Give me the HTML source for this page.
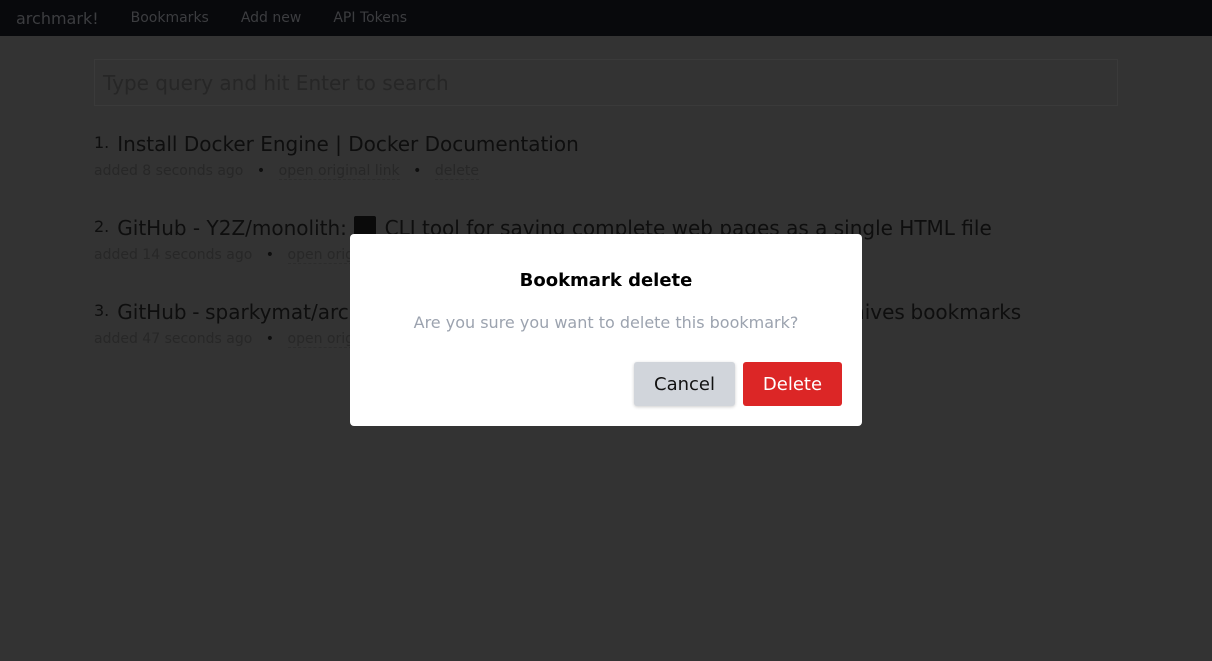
<!DOCTYPE html>
<html><head><style>
*{box-sizing:border-box;margin:0;padding:0}
body{width:1212px;height:661px;overflow:hidden;background:#333;font-family:"DejaVu Sans","Liberation Sans",sans-serif;position:relative}
.nav{height:36px;background:#08090c;display:flex;align-items:center;padding-left:16px;font-size:15px;color:#3c3d40}
.nav span{margin-right:32px;font-size:14px}
.nav .brand{font-size:16px;margin-right:32px}
.search{position:absolute;left:94px;top:59px;width:1024px;height:47px;border:1px solid #3a3a3a;font-size:20px;color:#262626;padding:11px 8px 9px}
.item{position:absolute;left:94px;color:#0e0e0e}
.t{font-size:20px;white-space:nowrap}
.t small{font-size:16px;margin-right:8px;vertical-align:3px}
.sq{display:inline-block;width:22px;height:21px;background:#0a0a0a;border-radius:2px;vertical-align:-2px;margin:0 2px 0 1px}
.m{font-size:14px;color:#272727;margin-top:7px;white-space:nowrap}
.m b{font-weight:normal;margin:0 13.5px;color:#0e0e0e}
.m u{text-decoration:none;border-bottom:1px dashed #2c2c2c}
.dlg{position:absolute;left:350px;top:234px;width:512px;height:192px;background:#fff;border-radius:4px;text-align:center}
.dlg h3{font-size:18px;font-weight:bold;color:#000;margin-top:36px}
.dlg p{font-size:16px;color:#9ca3af;margin-top:22px}
.btn{position:absolute;top:128px;height:44px;border-radius:3px;font-size:18px;line-height:45px;text-align:center}
</style></head><body>
<div class="nav"><span class="brand">archmark!</span><span>Bookmarks</span><span>Add new</span><span>API Tokens</span></div>
<div class="search">Type query and hit Enter to search</div>
<div class="item" style="top:132px"><div class="t"><small>1.</small>Install Docker Engine | Docker Documentation</div><div class="m">added 8 seconds ago<b>•</b><u>open original link</u><b>•</b><u>delete</u></div></div>
<div class="item" style="top:216px"><div class="t"><small>2.</small>GitHub - Y2Z/monolith: <span class="sq"></span> CLI tool for saving complete web pages as a single HTML file</div><div class="m">added 14 seconds ago<b>•</b><u>open original link</u></div></div>
<div class="item" style="top:300px"><div class="t" style="word-spacing:-0.7px"><small style="word-spacing:0">3.</small>GitHub - sparkymat/archmark: Self-hosted bookmarking service which archives bookmarks</div><div class="m">added 47 seconds ago<b>•</b><u>open original link</u></div></div>
<div class="dlg">
<h3>Bookmark delete</h3>
<p>Are you sure you want to delete this bookmark?</p>
<div class="btn" style="left:284px;width:101px;background:#d1d5db;color:#111;box-shadow:0 1px 3px rgba(0,0,0,.2)">Cancel</div>
<div class="btn" style="left:393px;width:99px;background:#dc2626;color:#fff">Delete</div>
</div>
</body></html>
